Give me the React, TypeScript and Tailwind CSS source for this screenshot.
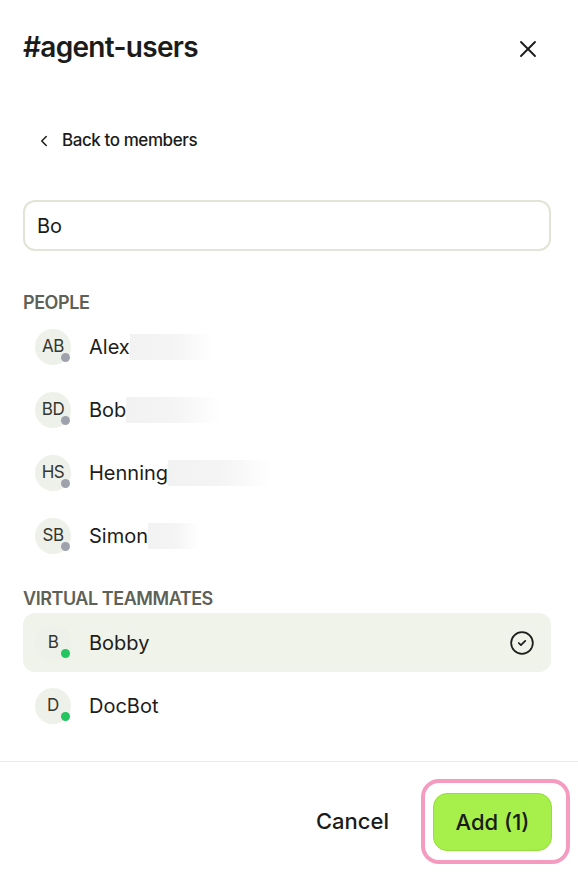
import React from 'react';
import { X, ChevronLeft, CircleCheck } from 'lucide-react';

type Member = {
  initials: string;
  name: string;
  blur: number;
  online?: boolean;
  selected?: boolean;
};

const people: Member[] = [
  { initials: 'AB', name: 'Alex', blur: 84 },
  { initials: 'BD', name: 'Bob', blur: 94 },
  { initials: 'HS', name: 'Henning', blur: 104 },
  { initials: 'SB', name: 'Simon', blur: 52 },
];

const teammates: Member[] = [
  { initials: 'B', name: 'Bobby', blur: 0, online: true, selected: true },
  { initials: 'D', name: 'DocBot', blur: 0, online: true },
];

const MemberRow = ({ member }: { member: Member }) => (
  <div
    className={`flex items-center h-[59px] pl-3 pr-4 rounded-[12px] ${
      member.selected ? 'bg-[#eff3e9]' : ''
    }`}
  >
    <div className="relative w-9 h-9 rounded-full bg-[#eef1e9] flex items-center justify-center shrink-0">
      <span className="text-[17px] text-[#34362f] tracking-tight">{member.initials}</span>
      <span
        className={`absolute left-[26px] top-[24px] w-[9px] h-[9px] rounded-full ${
          member.online ? 'bg-[#22c55e]' : 'bg-[#9fa1ad]'
        }`}
      ></span>
    </div>
    <span className="ml-[18px] text-[20px] text-[#1d1d1b]">{member.name}</span>
    {member.blur > 0 && (
      <span
        className="h-[26px] bg-gradient-to-r from-[#f2f2f2] via-[#f4f4f4] to-transparent"
        style={{ width: member.blur }}
      ></span>
    )}
    {member.selected && (
      <CircleCheck className="ml-auto text-[#1d1d1b]" size={26} strokeWidth={1.6} />
    )}
  </div>
);

const App = () => {
  return (
    <div
      className="w-[578px] h-[874px] bg-white flex flex-col overflow-hidden"
      style={{ fontFamily: 'Inter, "Noto Sans", sans-serif' }}
    >
      <div className="flex-1 pl-[23px] pr-[27px]">
        <div className="flex items-center justify-between pt-[30px]">
          <h1 className="text-[28px] leading-[34px] font-semibold tracking-tight text-[#1b1b19]">
            #agent-users
          </h1>
          <button className="mr-[9px] mt-[4px] text-[#1b1b19]">
            <X size={28} strokeWidth={1.6} />
          </button>
        </div>

        <button className="mt-[65px] ml-[12px] flex items-center h-6 gap-[9px] text-[#1b1b19]">
          <ChevronLeft size={18} strokeWidth={2} />
          <span className="text-[17px] font-medium tracking-tight">Back to members</span>
        </button>

        <div className="mt-[47px] h-[51px] rounded-[12px] border-2 border-[#e1e4d6] flex items-center px-[12px]">
          <span className="text-[20px] text-[#1b1b19]">Bo</span>
        </div>

        <div className="mt-[42px] h-5 leading-5 text-[18px] font-semibold text-[#5e6156] tracking-tight">
          PEOPLE
        </div>
        <div className="mt-[4px] flex flex-col gap-1">
          {people.map((m) => (
            <MemberRow key={m.name} member={m} />
          ))}
        </div>

        <div className="mt-[24px] h-5 leading-5 text-[18px] font-semibold text-[#5e6156] tracking-tight">
          VIRTUAL TEAMMATES
        </div>
        <div className="mt-[4px] flex flex-col gap-1">
          {teammates.map((m) => (
            <MemberRow key={m.name} member={m} />
          ))}
        </div>
      </div>

      <div className="h-[113px] border-t border-[#e9ecdf] flex justify-end items-start pt-[17px] pr-[8px]">
        <button className="mt-[26px] mr-[32px] text-[22px] font-medium text-[#1b1b19]">Cancel</button>
        <div className="border-4 border-[#f59bc0] rounded-[18px] pl-[8px] pr-[14px] pt-[10px] pb-[9px]">
          <button className="w-[119px] h-[58px] rounded-[14px] bg-[#a7f04b] border border-[#94de3e] text-[22px] font-medium text-[#1b1b19]">
            Add (1)
          </button>
        </div>
      </div>
    </div>
  );
};

export default App;
